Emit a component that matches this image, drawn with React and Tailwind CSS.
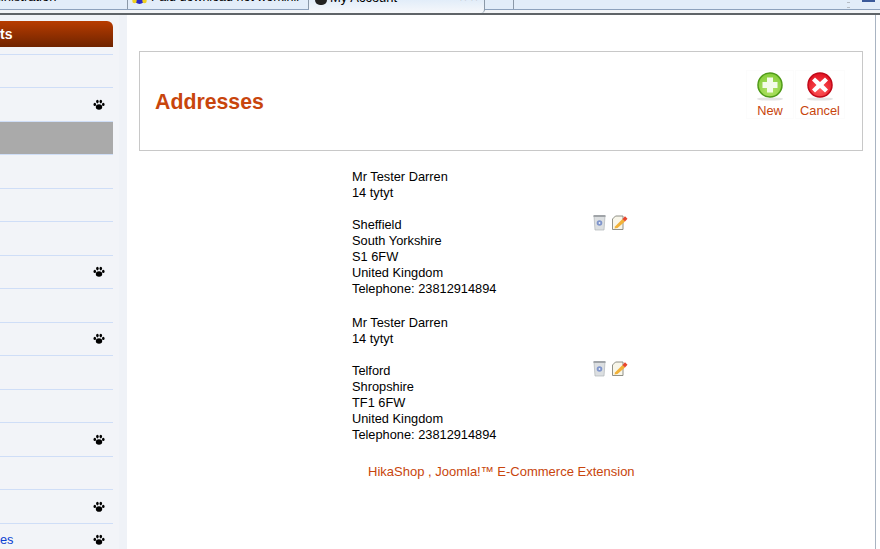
const Paw = () => (
  <svg width="12" height="12" viewBox="0 0 12 12" fill="#000">
    <ellipse cx="6" cy="8" rx="3.2" ry="2.8" />
    <ellipse cx="1.8" cy="5.4" rx="1.3" ry="1.7" />
    <ellipse cx="4.4" cy="2.6" rx="1.3" ry="1.8" />
    <ellipse cx="7.8" cy="2.6" rx="1.3" ry="1.8" />
    <ellipse cx="10.3" cy="5.4" rx="1.3" ry="1.7" />
  </svg>
);

const Trash = () => (
  <svg width="13" height="17" viewBox="0 0 13 17">
    <path d="M1 2 H12 L11 16 H2 Z" fill="#dcdfe1" stroke="#b0b4b7" strokeWidth="0.7" />
    <rect x="0.5" y="1" width="12" height="2" fill="#a0a4a8" />
    <circle cx="6.5" cy="9" r="2.8" fill="#7f95cc" />
    <circle cx="6.5" cy="9" r="0.9" fill="#eef2f9" />
  </svg>
);

const EditNote = () => (
  <svg width="17" height="17" viewBox="0 0 17 17">
    <path d="M1.5 5 L4.5 2 H12 V15.5 H1.5 Z" fill="#f8f6ea" stroke="#85857a" strokeWidth="0.9" />
    <path d="M4 12.5 L11.5 5 L14 7.5 L6.5 14 L3.5 14.5 Z" fill="#f2b238" />
    <path d="M11.5 5 L14 2.2 L16.5 4.8 L14 7.5 Z" fill="#e8452c" />
  </svg>
);

const RoundBtn = ({ from, to, ring, children }) => (
  <svg width="30" height="32" viewBox="0 0 30 32">
    <defs>
      <radialGradient id={ring} cx="0.5" cy="0.7" r="0.7">
        <stop offset="0" stopColor={from} />
        <stop offset="1" stopColor={to} />
      </radialGradient>
    </defs>
    <ellipse cx="15" cy="28" rx="13" ry="1.6" fill="#e4e4e4" />
    <circle cx="15" cy="14" r="12" fill={`url(#${ring})`} stroke={ring} strokeWidth="1.5" />
    {children}
  </svg>
);

const menuRows = [
  { h: "h-[33px]" },
  { h: "h-[34px]", paw: true },
  { h: "h-[33px]", active: true },
  { h: "h-[34px]" },
  { h: "h-[33px]" },
  { h: "h-[34px]" },
  { h: "h-[33px]", paw: true },
  { h: "h-[34px]" },
  { h: "h-[33px]", paw: true },
  { h: "h-[34px]" },
  { h: "h-[33px]" },
  { h: "h-[34px]", paw: true },
  { h: "h-[33px]" },
  { h: "h-[34px]", paw: true },
  { h: "h-[33px]", paw: true, label: "es" },
];

const addresses = [
  { city: "Sheffield", county: "South Yorkshire", code: "S1 6FW" },
  { city: "Telford", county: "Shropshire", code: "TF1 6FW" },
];

const Address = ({ city, county, code }) => (
  <div className="flex w-[276px] items-start justify-between leading-4">
    <div>
      Mr Tester Darren
      <br />
      14 tytyt
      <br />
      <br />
      {city}
      <br />
      {county}
      <br />
      {code}
      <br />
      United Kingdom
      <br />
      Telephone: 23812914894
    </div>
    <div className="mt-[45px] flex items-start gap-[5px]">
      <Trash />
      <EditNote />
    </div>
  </div>
);

export default function App() {
  return (
    <div className="flex h-[549px] w-[880px] flex-col overflow-hidden bg-white font-['Liberation_Sans',sans-serif] text-[12.8px] text-black">
      {/* browser tab strip, cut off by the top of the shot */}
      <div className="flex h-[15px] flex-none border-b-2 border-[#5f6468] bg-[#f2f4f7]">
        <div className="flex h-[10px] w-full border-b border-[#8da2bd] bg-[#e2edf9]">
          <div className="flex w-[128px] items-end overflow-hidden border-r border-[#8b99a8]">
            <span className="mb-[6px] ml-[-10px] whitespace-nowrap text-[13px] leading-[12px]">ministration</span>
          </div>
          <div className="flex w-[181px] items-end gap-[4px] overflow-hidden border-r border-[#8b99a8] pl-[4px]">
            <svg width="15" height="15" viewBox="0 0 15 15" className="mb-[3px] flex-none">
              <circle cx="7.5" cy="8" r="5" fill="#2a2ac8" />
              <circle cx="2.5" cy="10" r="2.2" fill="#f0d020" />
              <circle cx="12.5" cy="10" r="2.2" fill="#f0d020" />
            </svg>
            <span className="mb-[6px] whitespace-nowrap text-[12.5px] leading-[12px]">Paid download not workinli</span>
          </div>
          <div className="flex h-[13px] w-[176px] flex-none items-start justify-between overflow-hidden rounded-br-sm border-r border-[#8b99a8] bg-[linear-gradient(#e2edf9,#f6f8fb)] pl-[6px] pr-[6px]">
            <div className="flex items-start gap-[3px]">
              <span className="mt-[-5px] h-[10px] w-[12px] rounded-full bg-[#222]" />
              <span className="mt-[-8px] whitespace-nowrap text-[13px] leading-[12px]">My Account</span>
            </div>
            <span className="mt-[-8px] leading-[12px] text-[#999]">× ×</span>
          </div>
          <div className="w-[29px] flex-none border-r border-[#8b99a8]" />
          <div className="flex flex-1 items-start justify-end pr-[5px]">
            <span className="mr-[12px] mt-[2px] h-[6px] w-[3px] border-y border-[#b5bcc4]" />
            <span className="h-[2px] w-[13px] bg-[#3b5a9a]" />
          </div>
        </div>
      </div>

      <div className="flex flex-1 overflow-hidden">
        {/* left menu */}
        <div className="flex w-[127px] flex-none bg-[#f2f4f8]">
          <div className="w-[113px] flex-none pt-[6px]">
            <div className="flex h-[26px] items-center rounded-tr-md bg-[linear-gradient(#b83c00,#6f2400)] text-[14px] font-bold text-white">
              ts
            </div>
            <div className="h-[7px]" />
            {menuRows.map((row, i) => (
              <div
                key={i}
                className={`flex items-center justify-between border-t border-[#cfdef7] pr-[8px] ${row.h} ${
                  row.active ? "bg-[#aaaaaa]" : ""
                }`}
              >
                <span className="text-[#0b3fd0]">{row.label}</span>
                {row.paw && <Paw />}
              </div>
            ))}
          </div>
          <div className="ml-auto w-[8px] bg-[#eff2f7]" />
        </div>

        {/* main */}
        <div className="w-[749px] flex-none border-r border-[#a9b4c2] px-[12px] pt-[36px]">
          <div className="flex h-[100px] items-center justify-between border border-[#c8c8c8] pl-[15px] pr-[17px]">
            <h1 className="mt-[4px] text-[21.3px] font-bold text-[#c8450c]">Addresses</h1>
            <div className="mb-[14px] flex gap-[1px] text-[#c8450c]">
              <div className="flex w-[48px] flex-col items-center border border-[#fcfcfc]">
                <RoundBtn from="#b4e468" to="#84cc38" ring="#4f9a18">
                  <path d="M12 6.5 H18 V11 H22.5 V17 H18 V21.5 H12 V17 H7.5 V11 H12 Z" fill="#f4fbe8" />
                </RoundBtn>
                <span className="mt-[1px] leading-[14px]">New</span>
              </div>
              <div className="flex w-[50px] flex-col items-center border border-[#fcfcfc]">
                <RoundBtn from="#ff5a5a" to="#e01020" ring="#c00818">
                  <path d="M10 6.5 L15 11 L20 6.5 L23 9.5 L18.5 14 L23 18.5 L20 21.5 L15 17 L10 21.5 L7 18.5 L11.5 14 L7 9.5 Z" fill="#fff" />
                </RoundBtn>
                <span className="mt-[1px] leading-[14px]">Cancel</span>
              </div>
            </div>
          </div>

          <div className="ml-[213px] mt-[18px] flex flex-col gap-[18px]">
            {addresses.map((a) => (
              <Address key={a.city} {...a} />
            ))}
          </div>

          <div className="ml-[229px] mt-[19px] text-[13px] text-[#c8450c]">HikaShop , Joomla!™ E-Commerce Extension</div>
        </div>
      </div>
    </div>
  );
}
